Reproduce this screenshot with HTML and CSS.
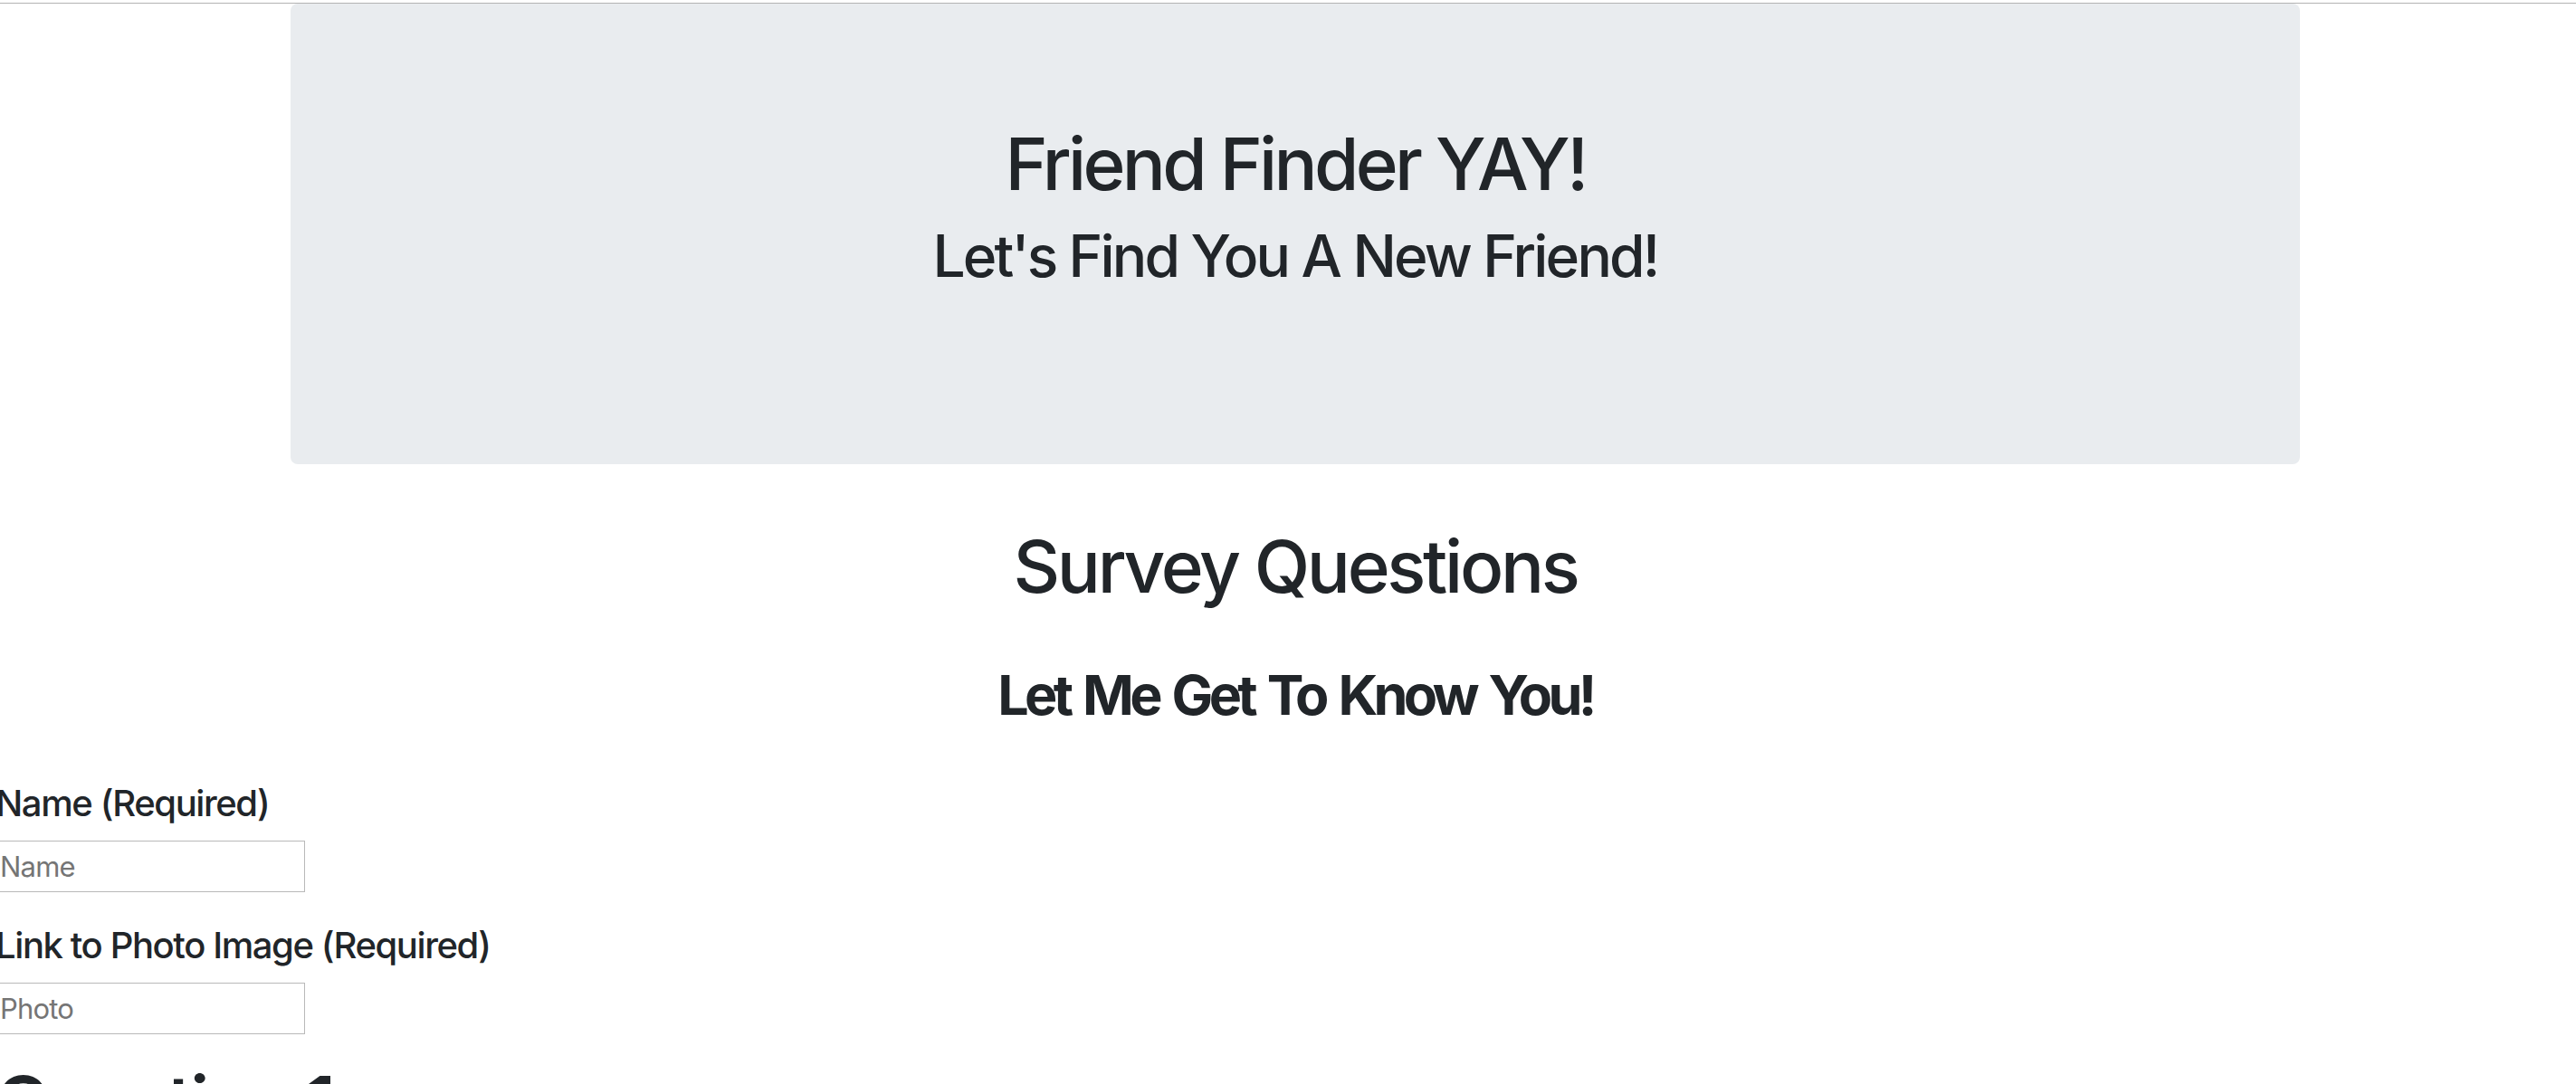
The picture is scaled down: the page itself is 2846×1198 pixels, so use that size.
FILE: index.html
```html
<!DOCTYPE html>
<html lang="en">
<head>
<meta charset="utf-8">
<title>Friend Finder</title>
<link rel="stylesheet" href="styles.css">
</head>
<body>
<div class="top-line"></div>
<div class="page">
  <div class="jumbotron">
    <h1 class="display-title">Friend Finder YAY!</h1>
    <h2 class="display-sub">Let's Find You A New Friend!</h2>
  </div>
  <h1 class="survey-title">Survey Questions</h1>
  <h2 class="survey-sub"><strong>Let Me Get To Know You!</strong></h2>
</div>
<form class="survey-form">
  <div class="field">
    <h5 class="field-label">Name (Required)</h5>
    <input class="field-input" type="text" placeholder="Name">
  </div>
  <div class="field">
    <h5 class="field-label">Link to Photo Image (Required)</h5>
    <input class="field-input" type="text" placeholder="Photo">
  </div>
  <h2 class="question-title">Question 1</h2>
</form>
</body>
</html>
```

FILE: styles.css
```css
html, body {
  margin: 0;
  padding: 0;
  background: #ffffff;
}

body {
  font-family: Inter, "Noto Sans", "Liberation Sans", sans-serif;
  color: #212529;
  overflow: hidden;
}

.top-line {
  margin-top: 3px;
  height: 1px;
  background: #b3b3b3;
}

.page {
  padding-left: 16px;
}

.jumbotron {
  width: 2220px;
  margin: 0 auto;
  box-sizing: border-box;
  background: #e9ecef;
  border-radius: 8px;
  padding: 129px 64px 191px;
  text-align: center;
}

.display-title {
  margin: 0 0 16px;
  font-size: 80px;
  font-weight: 500;
  line-height: 1.2;
  letter-spacing: -3.7px;
}

.display-sub {
  margin: 0;
  font-size: 64px;
  font-weight: 500;
  line-height: 1.2;
  letter-spacing: -2.8px;
}

.survey-title {
  margin: 65px 0 0;
  text-align: center;
  font-size: 80px;
  font-weight: 500;
  line-height: 1.2;
  letter-spacing: -3.3px;
}

.survey-sub {
  margin: 58px 0 2px;
  text-align: center;
  font-size: 61px;
  font-weight: 500;
  line-height: 1.2;
  letter-spacing: -4.7px;
  word-spacing: 5px;
}

.survey-sub strong {
  font-weight: 700;
}

.survey-form {
  margin: 59px 0 0 -5px;
  display: flex;
  flex-direction: column;
  align-items: flex-start;
}

.field {
  display: flex;
  flex-direction: column;
  align-items: flex-start;
  margin-bottom: 35px;
}

.field-label {
  margin: 0 0 17px;
  font-size: 40px;
  font-weight: 500;
  line-height: 1.2;
  letter-spacing: -1.4px;
}

.field-input {
  width: 342px;
  height: 57px;
  box-sizing: border-box;
  border: 1px solid #b9b9b9;
  border-radius: 0;
  padding: 0 4px;
  margin: 0;
  font-family: Inter, "Noto Sans", sans-serif;
  font-size: 31px;
  letter-spacing: -0.8px;
  color: #212529;
  background: #ffffff;
  outline: none;
}

.field-input::placeholder {
  color: #757575;
}

.question-title {
  margin: -8px 0 0;
  font-size: 80px;
  font-weight: 600;
  line-height: 1.2;
  letter-spacing: -3px;
}
```
